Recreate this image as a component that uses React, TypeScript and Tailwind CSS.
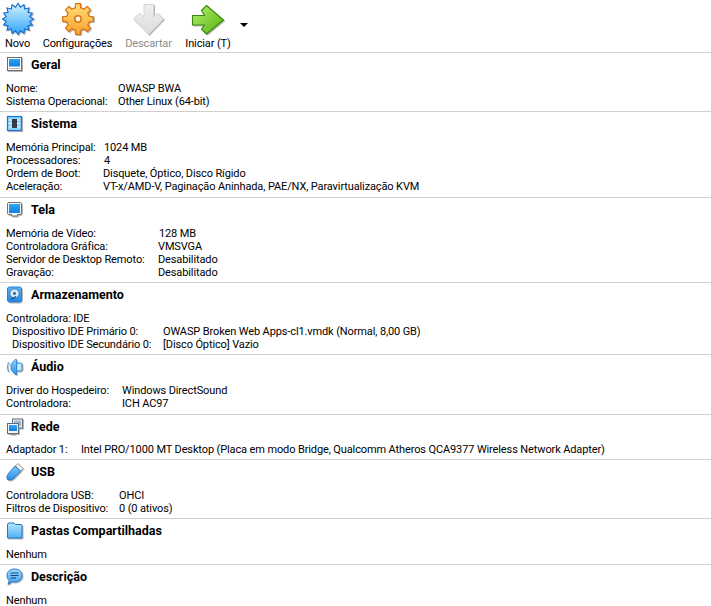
import React from "react";

const shadow = "drop-shadow-[1px_1px_0_rgba(0,0,0,0.28)]";

function starPoints(cx: number, cy: number, n: number, ro: number, ri: number) {
  const p: string[] = [];
  for (let i = 0; i < n * 2; i++) {
    const r = i % 2 === 0 ? ro : ri;
    const a = (Math.PI * i) / n - Math.PI / 2;
    p.push(`${(cx + r * Math.cos(a)).toFixed(2)},${(cy + r * Math.sin(a)).toFixed(2)}`);
  }
  return p.join(" ");
}

function gearPoints(cx: number, cy: number, n: number, ro: number, ri: number) {
  const p: string[] = [];
  const step = (Math.PI * 2) / n;
  for (let i = 0; i < n; i++) {
    const a = i * step - Math.PI / 2;
    const w = step * 0.2;
    const w2 = step * 0.3;
    [[a - w2, ri], [a - w, ro], [a + w, ro], [a + w2, ri]].forEach(([t, r]) =>
      p.push(`${(cx + r * Math.cos(t)).toFixed(2)},${(cy + r * Math.sin(t)).toFixed(2)}`)
    );
  }
  return p.join(" ");
}

const Novo = () => (
  <svg width="34" height="33" viewBox="0 0 34 33" className={shadow}>
    <defs>
      <linearGradient id="nv" x1="0" y1="0" x2="0" y2="1">
        <stop offset="0" stopColor="#d2f3ff" />
        <stop offset="1" stopColor="#2ea3f7" />
      </linearGradient>
    </defs>
    <polygon points={starPoints(17, 17, 16, 15.5, 12)} fill="url(#nv)" stroke="#1a6fd4" strokeWidth="1.2" />
  </svg>
);

const Gear = () => (
  <svg width="34" height="33" viewBox="0 0 34 33" className={shadow}>
    <defs>
      <linearGradient id="gr" x1="0" y1="0" x2="0" y2="1">
        <stop offset="0" stopColor="#ffe07a" />
        <stop offset="1" stopColor="#f8a12a" />
      </linearGradient>
    </defs>
    <polygon points={gearPoints(17, 17, 8, 15.5, 11.5)} fill="url(#gr)" stroke="#dd7417" strokeWidth="1.3" strokeLinejoin="round" />
    <circle cx="17" cy="17" r="3.2" fill="#fff6df" stroke="#d9781f" strokeWidth="1.6" />
  </svg>
);

const Discard = () => (
  <svg width="34" height="33" viewBox="0 0 34 33" className={shadow}>
    <defs>
      <linearGradient id="dc" x1="0" y1="0" x2="0" y2="1">
        <stop offset="0" stopColor="#efefef" />
        <stop offset="1" stopColor="#dcdcdc" />
      </linearGradient>
    </defs>
    <path d="M12 2.5H21.5V15L25.5 11L31.5 17L16.5 32.5L1.5 17L7.5 11L12 15Z" fill="url(#dc)" stroke="#d4d4d4" />
  </svg>
);

const Start = () => (
  <svg width="34" height="33" viewBox="0 0 34 33" className={shadow}>
    <defs>
      <linearGradient id="st" x1="0" y1="0" x2="1" y2="1">
        <stop offset="0" stopColor="#b6ef6e" />
        <stop offset="1" stopColor="#53b30c" />
      </linearGradient>
    </defs>
    <path d="M1.5 13.5H13.5L10.5 8.5L15.5 3.5L32.5 18L15.5 32L10.5 27L13.5 23H1.5Z" fill="url(#st)" stroke="#3a8a12" strokeWidth="1.1" strokeLinejoin="round" />
  </svg>
);

const G = ({ id, a, b }: { id: string; a: string; b: string }) => (
  <defs>
    <linearGradient id={id} x1="0" y1="0" x2="0" y2="1">
      <stop offset="0" stopColor={a} />
      <stop offset="1" stopColor={b} />
    </linearGradient>
  </defs>
);

const IconGeral = () => (
  <svg width="18" height="18" viewBox="0 0 18 18" className={shadow}>
    <G id="i1" a="#2aa4f4" b="#0f7be0" />
    <rect x="1.5" y="1.5" width="14" height="13" fill="#fff" stroke="#6b6b6b" />
    <rect x="3" y="3" width="11" height="7.5" fill="url(#i1)" />
    <rect x="3" y="12" width="11" height="1" fill="#b5b5b5" />
  </svg>
);

const IconSistema = () => (
  <svg width="18" height="18" viewBox="0 0 18 18" className={shadow}>
    <rect x="1.5" y="1.5" width="14" height="14" fill="#8fd4f7" stroke="#1c75d6" strokeWidth="1.2" />
    <path d="M3 5H14M3 8.5H14M3 12H14" stroke="#eefaff" strokeWidth="1" />
    <rect x="6" y="4" width="5" height="9" fill="#333a48" />
  </svg>
);

const IconTela = () => (
  <svg width="18" height="18" viewBox="0 0 18 18" className={shadow}>
    <G id="i3" a="#30a8f6" b="#0f80e6" />
    <path d="M3 1.5H14Q15.5 1.5 15.5 3V12Q15.5 13.5 14 13.5H11.5V15H5.5V13.5H3Q1.5 13.5 1.5 12V3Q1.5 1.5 3 1.5Z" fill="#f4f4f4" stroke="#727272" />
    <rect x="3" y="3" width="11" height="9" fill="url(#i3)" />
  </svg>
);

const IconStorage = () => (
  <svg width="18" height="18" viewBox="0 0 18 18" className={shadow}>
    <G id="i4" a="#5cb8f6" b="#1f86e4" />
    <rect x="1.5" y="1" width="14" height="15" rx="2" fill="url(#i4)" stroke="#2a7fd6" />
    <circle cx="8.5" cy="7.5" r="4.7" fill="#cfeafb" stroke="#2a5f96" strokeWidth="0.8" />
    <circle cx="8.5" cy="7.5" r="1.4" fill="#2a5f96" />
    <path d="M5 13.5L10 10.5" stroke="#1f4f84" strokeWidth="1.3" />
  </svg>
);

const IconAudio = () => (
  <svg width="18" height="18" viewBox="0 0 18 18" className={shadow}>
    <G id="i5" a="#8bd3fa" b="#2a93e8" />
    <path d="M2.5 4Q0 9 2.5 14" fill="none" stroke="#3f9de8" strokeWidth="1" />
    <path d="M5 6.5L9 1.5H10.5V16.5H9L5 11.5Z" fill="url(#i5)" stroke="#2b7fd4" strokeWidth="0.8" />
    <rect x="10.5" y="5" width="5.5" height="8" rx="1.5" fill="#bfe8fd" stroke="#2b7fd4" strokeWidth="1" />
  </svg>
);

const IconNet = () => (
  <svg width="18" height="18" viewBox="0 0 18 18" className={shadow}>
    <G id="i6" a="#35a9f5" b="#0f7ee0" />
    <rect x="6.5" y="1" width="10" height="9" fill="#eef2f5" stroke="#5f6b77" />
    <rect x="8" y="2.5" width="7" height="5.5" fill="#9fb5c9" />
    <rect x="1.5" y="5.5" width="11" height="10" fill="#f4f4f4" stroke="#5f6b77" />
    <rect x="3" y="7" width="8" height="6" fill="url(#i6)" />
    <rect x="4.5" y="15.5" width="5" height="1.2" fill="#7d7d7d" />
  </svg>
);

const IconUsb = () => (
  <svg width="18" height="18" viewBox="0 0 18 18" className={shadow}>
    <G id="i7" a="#7ccaf9" b="#2c8be6" />
    <path d="M12 0.5L17 5.5L14.5 8L9.5 3Z" fill="#f4f4f4" stroke="#8d8d8d" strokeWidth="0.9" />
    <path d="M9 3L14.5 8.5L7 16Q4 18 1.5 16.5Q0 14 2 11Z" fill="url(#i7)" stroke="#2371cc" strokeWidth="0.9" />
  </svg>
);

const IconFolder = () => (
  <svg width="18" height="18" viewBox="0 0 18 18" className={shadow}>
    <G id="i8" a="#b4e6fd" b="#4eb0f3" />
    <path d="M1.5 2.5Q1.5 1 3 1H8L9.5 2.5H15Q16 2.5 16 3.5V16H1.5Z" fill="url(#i8)" stroke="#2375cf" />
  </svg>
);

const IconDesc = () => (
  <svg width="18" height="18" viewBox="0 0 18 18" className={shadow}>
    <G id="i9" a="#9fdcfb" b="#3d9eec" />
    <path d="M8.5 1C13 1 16 3.5 16 7.5S13 14 8.5 14C7.5 14 6.5 13.8 6 13.6L2 16.5L3.2 12.4C1.8 11.2 1 9.5 1 7.5C1 3.5 4 1 8.5 1Z" fill="url(#i9)" stroke="#2375cf" />
    <path d="M4.5 5H12.5M4.5 7.5H12.5M4.5 10H10" stroke="#16457e" strokeWidth="1" />
  </svg>
);

function ToolButton({ label, w, disabled, children }: { label: string; w: string; disabled?: boolean; children: React.ReactNode }) {
  return (
    <div className={`flex flex-col items-center ${w}`}>
      <div className="flex h-[37px] w-[34px] items-start justify-center pt-[2px]">{children}</div>
      <div className={`whitespace-nowrap text-[11px] leading-[13px] tracking-[-0.12px] ${disabled ? "text-[#8b8b8b]" : "text-black"}`}>{label}</div>
    </div>
  );
}

function Section({ icon, title, pt, pb, children }: { icon: React.ReactNode; title: string; pt?: string; pb: string; children: React.ReactNode }) {
  return (
    <section className={`border-t border-[#d0d0d0] pl-[6px] ${pb}`}>
      <div className="flex h-[24px] items-center">
        <span className="flex w-[25px] items-center">{icon}</span>
        <h2 className="text-[12.5px] font-bold text-black">{title}</h2>
      </div>
      <div className={pt ?? "pt-[5px]"}>{children}</div>
    </section>
  );
}

function Row({ label, value, w, pl }: { label: string; value: string; w: string; pl?: string }) {
  return (
    <div className={`flex h-[13px] items-center whitespace-nowrap text-[11px] leading-[13px] tracking-[-0.12px] text-black ${pl ?? ""}`}>
      <span className={w}>{label}</span>
      <span>{value}</span>
    </div>
  );
}

export default function App() {
  return (
    <div className="h-[606px] w-[711px] overflow-hidden bg-white font-['Roboto','Liberation_Sans',sans-serif]">
      <header className="flex h-[52px] gap-[13px] pl-[5px]">
        <ToolButton label="Novo" w="w-[25px]"><Novo /></ToolButton>
        <ToolButton label="Configurações" w="w-[69px]"><Gear /></ToolButton>
        <ToolButton label="Descartar" w="w-[47px]" disabled><Discard /></ToolButton>
        <ToolButton label="Iniciar (T)" w="w-[46px]"><Start /></ToolButton>
        <div className="ml-[-4px] mt-[23px] h-0 w-0 border-x-[4px] border-t-[4px] border-x-transparent border-t-black" />
      </header>

      <Section icon={<IconGeral />} title="Geral" pb="pb-[3px]">
        <Row label="Nome:" value="OWASP BWA" w="w-[112px]" />
        <Row label="Sistema Operacional:" value="Other Linux (64-bit)" w="w-[112px]" />
      </Section>

      <Section icon={<IconSistema />} title="Sistema" pb="pb-[4px]">
        <Row label="Memória Principal:" value="1024 MB" w="w-[98px]" />
        <Row label="Processadores:" value="4" w="w-[98px]" />
        <Row label="Ordem de Boot:" value="Disquete, Óptico, Disco Rígido" w="w-[97px]" />
        <Row label="Aceleração:" value="VT-x/AMD-V, Paginação Aninhada, PAE/NX, Paravirtualização KVM" w="w-[97px]" />
      </Section>

      <Section icon={<IconTela />} title="Tela" pb="pb-[3px]">
        <Row label="Memória de Vídeo:" value="128 MB" w="w-[153px]" />
        <Row label="Controladora Gráfica:" value="VMSVGA" w="w-[152px]" />
        <Row label="Servidor de Desktop Remoto:" value="Desabilitado" w="w-[152px]" />
        <Row label="Gravação:" value="Desabilitado" w="w-[152px]" />
      </Section>

      <Section icon={<IconStorage />} title="Armazenamento" pb="pb-[3px]">
        <Row label="Controladora: IDE" value="" w="" />
        <Row label="Dispositivo IDE Primário 0:" value="OWASP Broken Web Apps-cl1.vmdk (Normal, 8,00 GB)" w="w-[151px]" pl="pl-[6px]" />
        <Row label="Dispositivo IDE Secundário 0:" value="[Disco Óptico] Vazio" w="w-[151px]" pl="pl-[6px]" />
      </Section>

      <Section icon={<IconAudio />} title="Áudio" pb="pb-[4px]">
        <Row label="Driver do Hospedeiro:" value="Windows DirectSound" w="w-[116px]" />
        <Row label="Controladora:" value="ICH AC97" w="w-[116px]" />
      </Section>

      <Section icon={<IconNet />} title="Rede" pt="pt-[4px]" pb="pb-[3px]">
        <Row label="Adaptador 1:" value="Intel PRO/1000 MT Desktop (Placa em modo Bridge, Qualcomm Atheros QCA9377 Wireless Network Adapter)" w="w-[75px]" />
      </Section>

      <Section icon={<IconUsb />} title="USB" pb="pb-[3px]">
        <Row label="Controladora USB:" value="OHCI" w="w-[113px]" />
        <Row label="Filtros de Dispositivo:" value="0 (0 ativos)" w="w-[113px]" />
      </Section>

      <Section icon={<IconFolder />} title="Pastas Compartilhadas" pb="pb-[3px]">
        <Row label="Nenhum" value="" w="" />
      </Section>

      <Section icon={<IconDesc />} title="Descrição" pb="pb-0">
        <Row label="Nenhum" value="" w="" />
      </Section>
    </div>
  );
}
